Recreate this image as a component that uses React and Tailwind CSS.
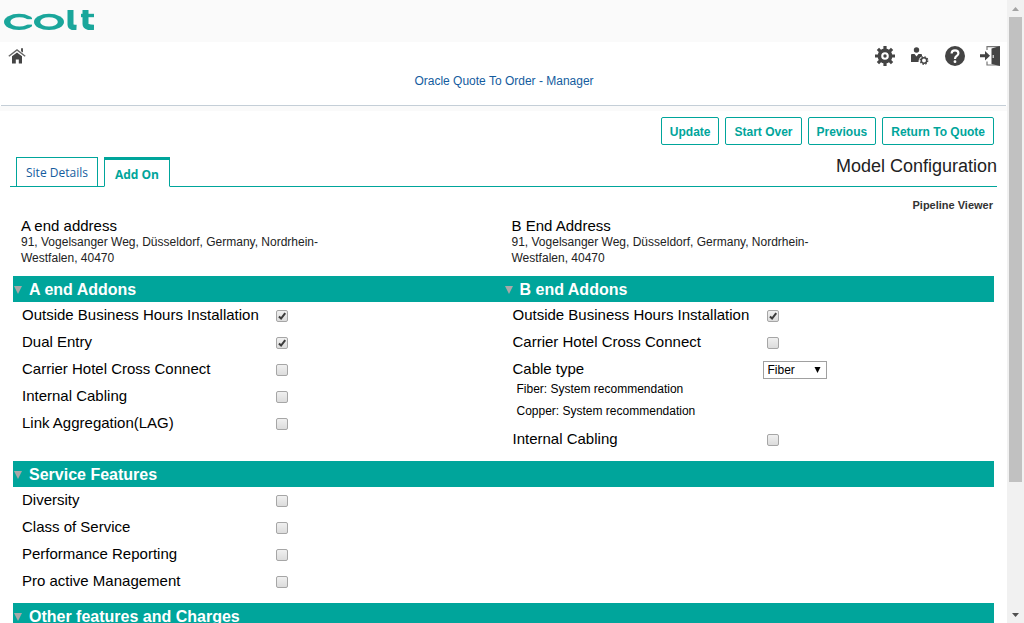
import React from "react";

function Logo() {
  return (
    <svg width="90" height="20" viewBox="0 0 90 20" fill="#1aa69b" role="img" aria-label="colt">
      <ellipse cx="15" cy="11.900" rx="15" ry="8.100" />
      <ellipse cx="15.500" cy="11.900" rx="9.200" ry="4.700" fill="#fafafa" />
      <rect x="20.500" y="9.200" width="10" height="5.400" fill="#fafafa" />
      <rect x="28" y="4" width="3" height="16" fill="#fafafa" />
      <ellipse cx="45" cy="11.900" rx="15" ry="8.100" />
      <ellipse cx="45" cy="11.900" rx="8.800" ry="4.700" fill="#fafafa" />
      <g fill="none" stroke="#1aa69b">
        <path d="M66.500 0V14.500Q66.500 17.500 72.500 17.800" strokeWidth="6" />
        <path d="M81.500 0V14Q81.500 17.500 90 17.800" strokeWidth="6" />
        <path d="M77 5.500H90" strokeWidth="3.400" />
      </g>
    </svg>
  );
}

function HomeIcon() {
  return (
    <svg width="18" height="16" viewBox="0 0 18 16">
      <path d="M.8 8.200L9 2l8.200 6.200" fill="none" stroke="#666" strokeWidth="1.400" />
      <path d="M13 .3h2v4.300l-2-1.400z" fill="#555" />
      <path d="M9 4.500l5 3.800V15.500h-3.200V11.500h-3v4H4V8.300z" fill="#444" />
    </svg>
  );
}

function GearIcon() {
  return (
    <svg width="20" height="20" viewBox="0 0 20 20" fill="none" stroke="#444">
      {[0, 45, 90, 135].map((angle) => (
        <path key={angle} d="M10 0V4.500M10 15.500V20" strokeWidth="3.200" transform={`rotate(${angle} 10 10)`} />
      ))}
      <circle cx="10" cy="10" r="5.600" strokeWidth="3.600" />
      <circle cx="10" cy="10" r="1.700" fill="#444" stroke="none" />
    </svg>
  );
}

function UserIcon() {
  return (
    <svg width="20" height="18" viewBox="0 0 20 18" fill="#444">
      <circle cx="6.500" cy="3" r="2.700" />
      <path d="M1 8q0-1 1-1h2.500L6.500 9.500 8.500 7H11q1 0 1 1v1.500Q8.500 10.500 8.500 15H1z" />
      <g fill="none" stroke="#444">
        <circle cx="14" cy="13.500" r="2.700" strokeWidth="1.500" />
        <circle cx="14" cy="13.500" r="3.800" strokeWidth="1.200" strokeDasharray="1.500 1.480" />
      </g>
    </svg>
  );
}

function HelpIcon() {
  return (
    <svg width="20" height="20" viewBox="0 0 20 20">
      <circle cx="10" cy="10" r="10" fill="#444" />
      <path d="M6.600 7.500Q6.600 4.300 10 4.300T13.400 7.300Q13.400 9 11.600 10Q10 11 10 13" fill="none" stroke="#fff" strokeWidth="2.200" />
      <circle cx="10" cy="15.700" r="1.400" fill="#fff" />
    </svg>
  );
}

function ExitIcon() {
  return (
    <svg width="20" height="20" viewBox="0 0 20 20">
      <path d="M0 8.200h5V5l5 4.700-5 4.700V11.200H0z" fill="#444" />
      <path d="M7 4V.700H19.500M19.500 19H7V15.500" fill="none" stroke="#777" strokeWidth="1.200" />
      <path d="M11.500 2.500L20 0V20L11.500 18z" fill="#444" />
      <path d="M13.200 9v3" stroke="#fff" strokeWidth="1" />
    </svg>
  );
}

function Checkbox({ id, checked }) {
  return (
    <span className="relative mt-px ml-1 flex size-3">
      <input
        id={id}
        type="checkbox"
        defaultChecked={checked}
        className="peer size-3 appearance-none rounded-[2px] border border-[#a6a6a6] bg-linear-to-b from-[#f0f0f0] to-[#dcdcdc]"
      />
      <svg viewBox="0 0 13 13" className="pointer-events-none absolute inset-0 hidden peer-checked:block">
        <path d="M3.200 7L5.500 9.300L10 3.500" fill="none" stroke="#3c3c3c" strokeWidth="2.200" />
      </svg>
    </span>
  );
}

function Field({ id, label, children }) {
  return (
    <div className="flex h-[27px] items-center">
      <label htmlFor={id} className="w-[259px] pb-0.5 pl-[9px] text-[15px] leading-[25px]">
        {label}
      </label>
      {children}
    </div>
  );
}

function CheckList({ prefix, items }) {
  return items.map(([label, checked]) => {
    const id = `${prefix}-${label.toLowerCase().replace(/[^a-z]+/g, "-")}`;
    return (
      <Field key={id} id={id} label={label}>
        <Checkbox id={id} checked={checked} />
      </Field>
    );
  });
}

function SectionTitle({ children }) {
  return (
    <h2 className="flex h-[26px] items-center gap-[7px] bg-[#00a59b] pt-0.5 pl-px text-base font-bold text-white">
      <svg width="8" height="8" viewBox="0 0 8 8" fill="#a8a8a8" aria-hidden="true">
        <path d="M0 0H8L4 8z" />
      </svg>
      {children}
    </h2>
  );
}

function Address({ title }) {
  return (
    <div className="pl-2">
      <h2 className="text-[15px] leading-4 text-black">{title}</h2>
      <p className="max-w-[310px] text-xs leading-4 text-[#222]">
        91, Vogelsanger Weg, Düsseldorf, Germany, Nordrhein-Westfalen, 40470
      </p>
    </div>
  );
}

function Scrollbar() {
  return (
    <div className="flex w-[17px] shrink-0 flex-col items-center bg-[#f1f1f1]" aria-hidden="true">
      <div className="flex h-[17px] items-center">
        <svg width="7" height="4" viewBox="0 0 7 4" fill="#a3a3a3"><path d="M0 4L3.500 0L7 4z" /></svg>
      </div>
      <div className="w-full flex-1 px-0.5">
        <div className="h-[79%] bg-[#c1c1c1]" />
      </div>
      <div className="flex h-[17px] items-center">
        <svg width="7" height="4" viewBox="0 0 7 4" fill="#505050"><path d="M0 0L3.500 4L7 0z" /></svg>
      </div>
    </div>
  );
}

const actions = ["Update", "Start Over", "Previous", "Return To Quote"];

export default function App() {
  return (
    <div className="flex h-screen overflow-hidden bg-white font-['Liberation_Sans',Arial,sans-serif] text-black">
      <div className="min-w-0 flex-1 overflow-hidden">
        <header>
          <div className="h-[42px] bg-[#fafafa] pt-2.5 pl-1">
            <Logo />
          </div>
          <div className="flex h-8 items-start justify-between pt-1 pr-[7px] pl-2">
            <a href="#home" aria-label="Home" className="pt-0.5"><HomeIcon /></a>
            <nav className="flex gap-[15px]">
              <a href="#settings" aria-label="Settings"><GearIcon /></a>
              <a href="#profile" aria-label="Profile" className="pt-px"><UserIcon /></a>
              <a href="#help" aria-label="Help"><HelpIcon /></a>
              <a href="#logout" aria-label="Log out"><ExitIcon /></a>
            </nav>
          </div>
          <div className="mr-px ml-px h-8 border-b border-[#c4ced7] pl-px text-center text-xs leading-[14px]">
            <a href="#manager" className="text-[#145c9e]">Oracle Quote To Order - Manager</a>
          </div>
          <div className="h-[5px] bg-[#fafafa]" />
        </header>

        <div className="flex justify-end gap-1.5 pt-1.5 pr-[13px]">
          {actions.map((action) => (
            <button key={action} type="button" className="h-7 rounded-[2px] border border-[#00a59b] px-2 pt-px text-xs font-bold text-[#00a59b]">
              {action}
            </button>
          ))}
        </div>

        <div className="mx-2.5 flex h-[42px] items-end border-b border-[#00a59b]">
          <nav className="-mb-px flex items-end gap-1.5 pl-1.5 font-['Open_Sans',sans-serif] text-xs">
            <a href="#site" className="flex h-[30px] items-center border border-[#00a59b] px-[9px] pt-0.5 text-[#145c9e]">Site Details</a>
            <a href="#addon" className="flex h-[30px] items-center border border-t-3 border-[#00a59b] border-b-white bg-white px-2.5 pt-1 font-bold text-[#00a59b]">Add On</a>
          </nav>
          <h1 className="mb-2.5 ml-auto text-lg leading-5 text-[#222]">Model Configuration</h1>
        </div>

        <main className="px-[13px]">
          <div className="pt-2.5 pr-px text-right text-[11px] leading-4 font-bold text-[#333]">Pipeline Viewer</div>
          <div className="grid grid-cols-2 pt-[5px] pb-2.5">
            <Address title="A end address" />
            <Address title="B End Address" />
          </div>

          <div className="grid grid-cols-2">
            <section className="pb-2">
              <SectionTitle>A end Addons</SectionTitle>
              <CheckList
                prefix="a"
                items={[
                  ["Outside Business Hours Installation", true],
                  ["Dual Entry", true],
                  ["Carrier Hotel Cross Connect", false],
                  ["Internal Cabling", false],
                  ["Link Aggregation(LAG)", false],
                ]}
              />
            </section>
            <section className="pb-2">
              <SectionTitle>B end Addons</SectionTitle>
              <CheckList
                prefix="b"
                items={[
                  ["Outside Business Hours Installation", true],
                  ["Carrier Hotel Cross Connect", false],
                ]}
              />
              <Field id="cable-type" label="Cable type">
                <span className="relative flex">
                  <select id="cable-type" className="h-[18px] w-16 appearance-none border border-[#a0a0a0] bg-white pl-1 text-xs leading-4">
                    <option>Fiber</option>
                    <option>Copper</option>
                  </select>
                  <svg width="7" height="6" viewBox="0 0 7 6" className="pointer-events-none absolute top-1.5 right-1.5" aria-hidden="true">
                    <path d="M.5 0H6.500L3.500 6z" />
                  </svg>
                </span>
              </Field>
              <div className="-mt-[5px] pb-1 pl-[13px] text-xs leading-[22px]">
                <p>Fiber: System recommendation</p>
                <p>Copper: System recommendation</p>
              </div>
              <CheckList prefix="b" items={[["Internal Cabling", false]]} />
            </section>
          </div>

          <section className="pb-2">
            <SectionTitle>Service Features</SectionTitle>
            <CheckList
              prefix="service"
              items={[
                ["Diversity", false],
                ["Class of Service", false],
                ["Performance Reporting", false],
                ["Pro active Management", false],
              ]}
            />
          </section>

          <section>
            <SectionTitle>Other features and Charges</SectionTitle>
          </section>
        </main>
      </div>
      <Scrollbar />
    </div>
  );
}
